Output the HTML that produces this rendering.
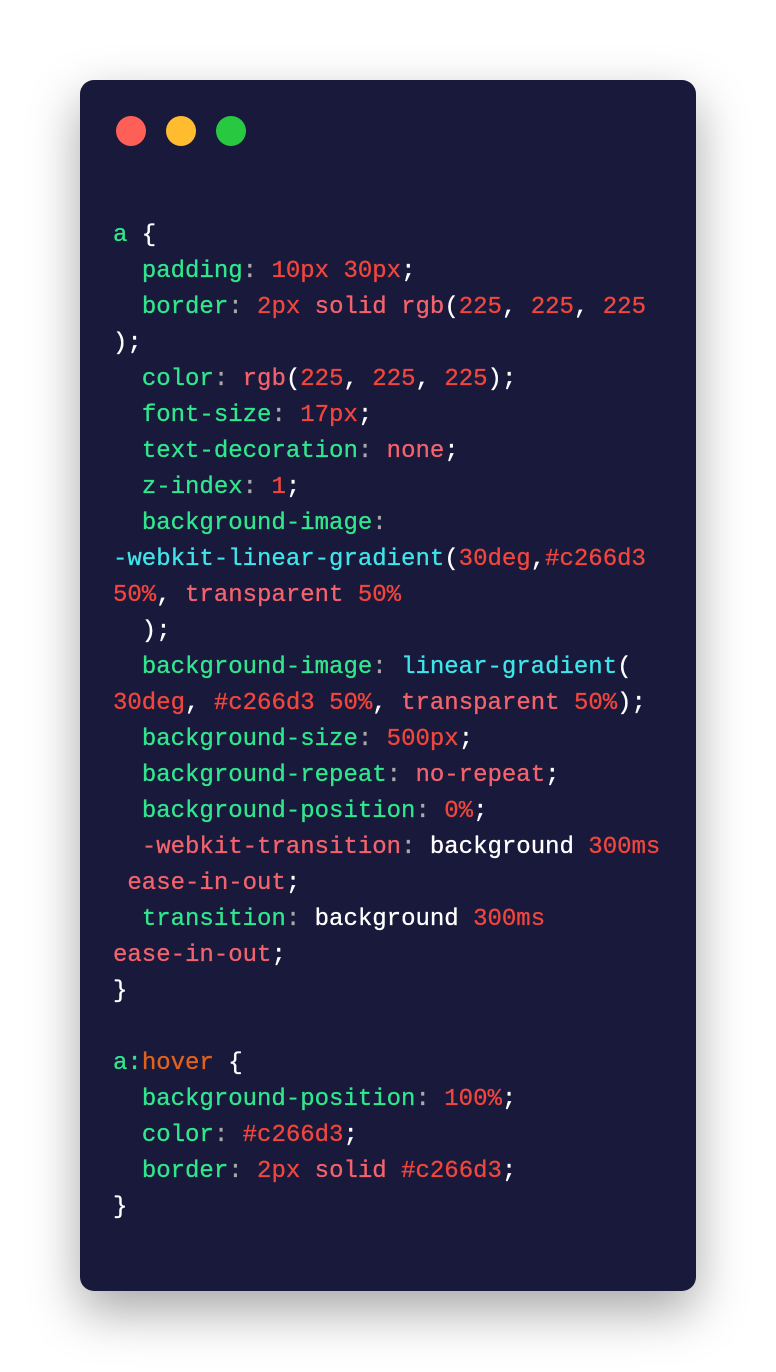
<!DOCTYPE html>
<html><head><style>
body{margin:0;width:776px;height:1372px;background:#fff;position:relative;overflow:hidden}
.card{position:absolute;left:80px;top:80px;width:616px;height:1211px;background:#19193c;border-radius:14px;box-shadow:0 20px 50px rgba(0,0,0,0.35)}
.d{position:absolute;top:116px;width:30px;height:30px;border-radius:50%}
pre{position:absolute;left:113px;top:218px;margin:0;font:24px/36px "Liberation Mono",monospace;color:#fff;white-space:pre;-webkit-text-stroke:0.3px currentColor}
.g{color:#2fe88c}.n{color:#f2463c}.k{color:#f4636c}.c{color:#aaa}.y{color:#3ee6ea}.o{color:#e2621c}
</style></head><body>
<div class="card"></div>
<div class="d" style="left:116px;background:#fe5f57"></div>
<div class="d" style="left:166px;background:#febc2e"></div>
<div class="d" style="left:216px;background:#28c840"></div>
<pre><span class="g">a</span> {
  <span class="g">padding</span><span class="c">:</span> <span class="n">10px 30px</span>;
  <span class="g">border</span><span class="c">:</span> <span class="n">2px</span> <span class="k">solid</span> <span class="k">rgb</span>(<span class="n">225</span>, <span class="n">225</span>, <span class="n">225</span>
);
  <span class="g">color</span><span class="c">:</span> <span class="k">rgb</span>(<span class="n">225</span>, <span class="n">225</span>, <span class="n">225</span>);
  <span class="g">font-size</span><span class="c">:</span> <span class="n">17px</span>;
  <span class="g">text-decoration</span><span class="c">:</span> <span class="k">none</span>;
  <span class="g">z-index</span><span class="c">:</span> <span class="n">1</span>;
  <span class="g">background-image</span><span class="c">:</span>
<span class="y">-webkit-linear-gradient</span>(<span class="n">30deg</span>,<span class="n">#c266d3</span>
<span class="n">50%</span>, <span class="k">transparent</span> <span class="n">50%</span>
  );
  <span class="g">background-image</span><span class="c">:</span> <span class="y">linear-gradient</span>(
<span class="n">30deg</span>, <span class="n">#c266d3</span> <span class="n">50%</span>, <span class="k">transparent</span> <span class="n">50%</span>);
  <span class="g">background-size</span><span class="c">:</span> <span class="n">500px</span>;
  <span class="g">background-repeat</span><span class="c">:</span> <span class="k">no-repeat</span>;
  <span class="g">background-position</span><span class="c">:</span> <span class="n">0%</span>;
  <span class="k">-webkit-transition</span><span class="c">:</span> background <span class="n">300ms</span>
 <span class="k">ease-in-out</span>;
  <span class="g">transition</span><span class="c">:</span> background <span class="n">300ms</span>
<span class="k">ease-in-out</span>;
}

<span class="g">a</span><span class="g">:</span><span class="o">hover</span> {
  <span class="g">background-position</span><span class="c">:</span> <span class="n">100%</span>;
  <span class="g">color</span><span class="c">:</span> <span class="n">#c266d3</span>;
  <span class="g">border</span><span class="c">:</span> <span class="n">2px</span> <span class="k">solid</span> <span class="n">#c266d3</span>;
}</pre>
</body></html>
